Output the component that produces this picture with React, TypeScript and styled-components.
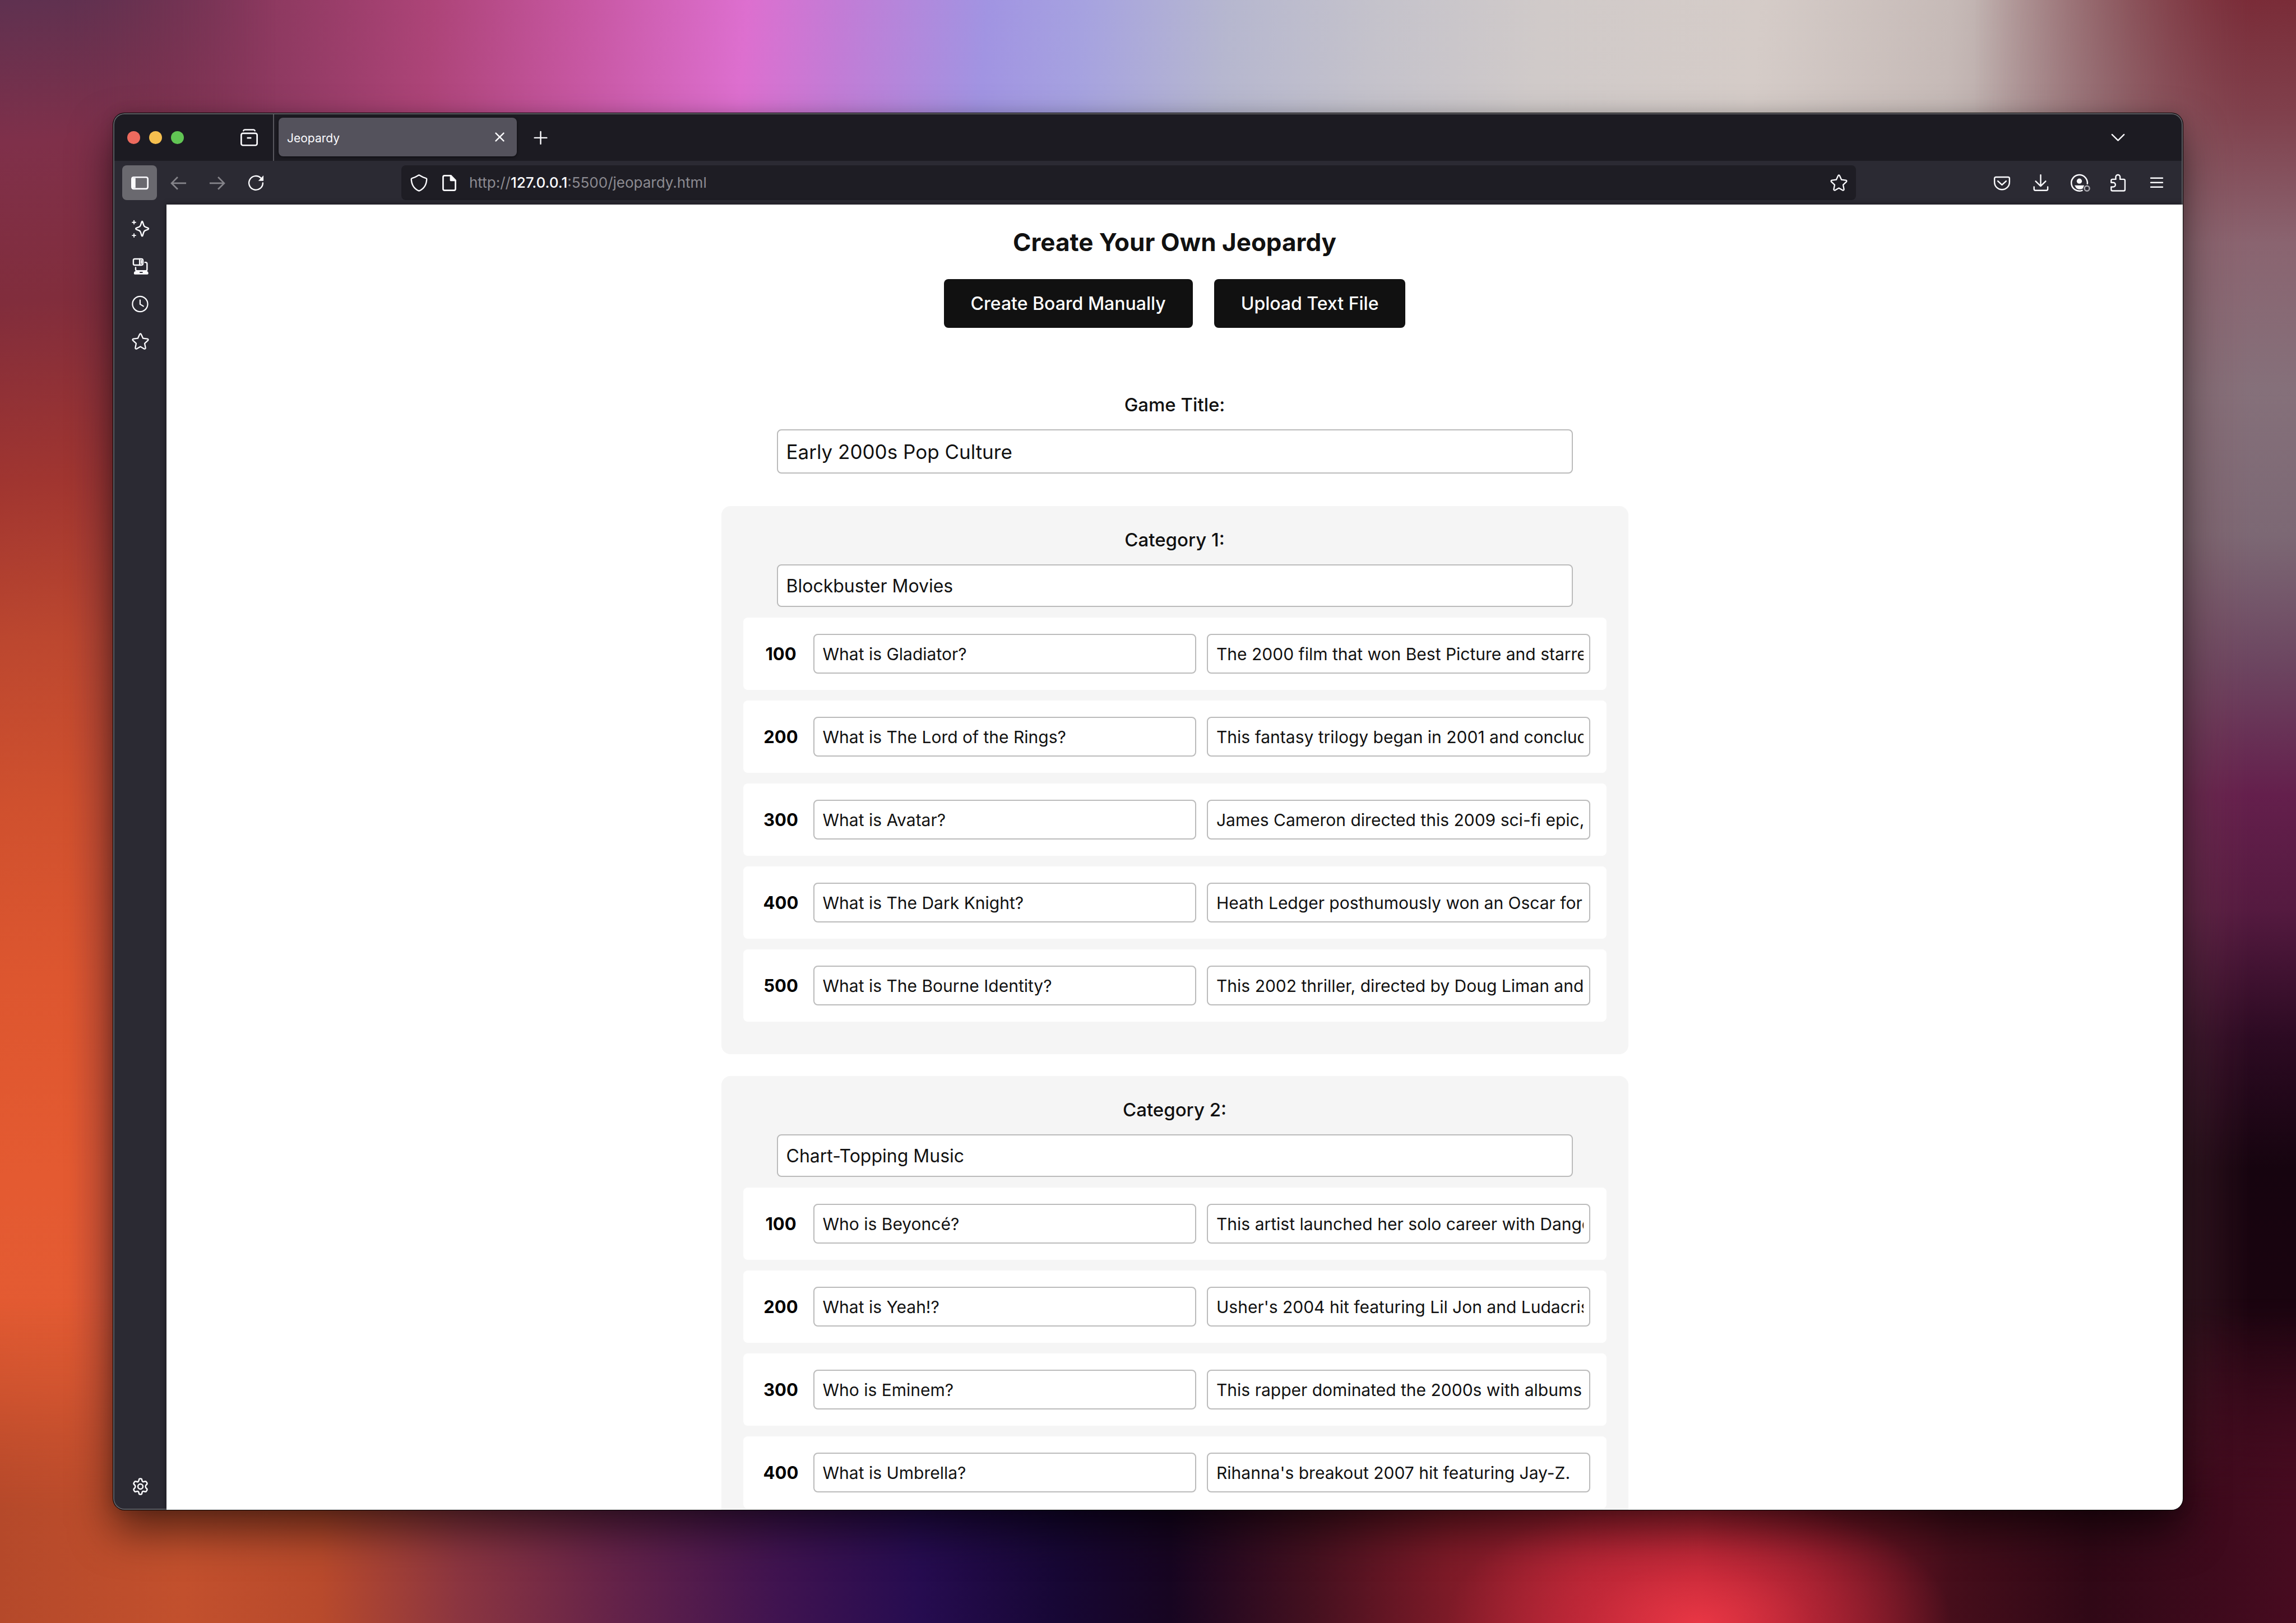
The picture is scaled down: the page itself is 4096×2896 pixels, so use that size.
import React from "react";
import styled, { createGlobalStyle, css } from "styled-components";

const GlobalStyle = createGlobalStyle`
  *, *::before, *::after { box-sizing: border-box; }
  html, body { margin: 0; }
  body, button, input {
    font-family: Inter, "Liberation Sans", sans-serif;
  }
`;

/* ---------- desktop ---------- */

const Desktop = styled.div`
  position: relative;
  isolation: isolate;
  display: flex;
  height: 100vh;
  padding: 202px;
  overflow: hidden;
  background: linear-gradient(
    94deg,
    #5f3352 0%,
    #7c3453 6%,
    #903a62 12%,
    #ad4478 18%,
    #c656a0 24%,
    #dd6fcf 31%,
    #c27cd6 35%,
    #a194e2 41%,
    #a6a2e0 45%,
    #b6b7cf 51%,
    #c4c2cb 57%,
    #d0cac9 64%,
    #d5ccc8 73%,
    #c6bab7 81%,
    #a48d8e 88%,
    #8c5860 94%,
    #7d3440 100%
  );
`;

const Edge = styled.div<{ $side: "left" | "right" | "bottom" }>`
  position: absolute;
  z-index: -1;
  inset: 0;
  ${({ $side }) =>
    $side === "left" &&
    css`
      background: linear-gradient(
        176deg,
        #5f3150 0%,
        #7f304a 8%,
        #812d3c 17%,
        #a03530 27%,
        #bc472f 36%,
        #cf502e 45%,
        #dd562f 55%,
        #e45a31 66%,
        #e35b33 78%,
        #d25231 86%,
        #bc4a2a 93%,
        #b3482a 100%
      );
      mask-image: linear-gradient(90deg, #000 0%, #000 3%, transparent 12%);
    `}
  ${({ $side }) =>
    $side === "right" &&
    css`
      background: linear-gradient(
        180deg,
        #7a2c38 0%,
        #80404c 7%,
        #8a6470 15%,
        #85707a 24%,
        #7c6874 33%,
        #6c4560 41%,
        #641f4c 49%,
        #551a40 56%,
        #2c0a22 64%,
        #16040f 72%,
        #1a040f 81%,
        #3c0a1c 90%,
        #4c0c22 100%
      );
      mask-image: linear-gradient(270deg, #000 0%, #000 2%, transparent 14%);
    `}
  ${({ $side }) =>
    $side === "bottom" &&
    css`
      background:
        radial-gradient(ellipse 11% 8% at 74% 100%, #e83644 0%, rgba(224, 48, 64, 0.5) 45%, transparent 100%),
        linear-gradient(
          90deg,
          #b5492a 0%,
          #c2502d 8%,
          #b84a2c 14%,
          #8b3540 20%,
          #632249 27%,
          #3f1350 34%,
          #260c50 40%,
          #170735 46%,
          #170521 51%,
          #43101f 57%,
          #7c1a27 63%,
          #a12030 69%,
          #ad2333 74%,
          #801828 79%,
          #460e1b 85%,
          #300816 91%,
          #470b20 100%
        );
      mask-image: linear-gradient(0deg, #000 0%, #000 7%, transparent 20%);
    `}
`;

/* ---------- browser window ---------- */

const frameLine = "2px solid #5e5d63";

const Window = styled.div`
  flex: 1;
  min-width: 0;
  display: flex;
  flex-direction: column;
  overflow: hidden;
  border-radius: 20px;
  background: #2b2a33;
  color: #fbfbfe;
  box-shadow:
    0 0 0 1px #050505,
    0 38px 76px rgba(0, 0, 0, 0.55),
    0 0 24px rgba(0, 0, 0, 0.15);
`;

const TitleBar = styled.div`
  flex: none;
  display: flex;
  height: 85px;
  border: ${frameLine};
  border-bottom: 0;
  border-radius: 20px 20px 0 0;
  background: #1c1b22;
`;

const TrafficLights = styled.div`
  display: flex;
  align-items: center;
  gap: 16px;
  padding-left: 23px;
`;

const Light = styled.button<{ $color: string }>`
  width: 23px;
  height: 23px;
  padding: 0;
  border: 0;
  border-radius: 50%;
  background: ${({ $color }) => $color};
`;

const IconButton = styled.button<{ $active?: boolean; $muted?: boolean }>`
  flex: none;
  display: grid;
  place-items: center;
  width: 62px;
  height: 62px;
  padding: 0;
  border: 0;
  border-radius: 8px;
  color: ${({ $muted }) => ($muted ? "#85848a" : "#fbfbfe")};
  background: ${({ $active }) => ($active ? "#6a696f" : "transparent")};
`;

const FirefoxView = styled.div`
  display: flex;
  align-items: center;
  margin-left: 85px;
  padding-right: 12px;
  border-right: 2px solid #57565d;
`;

const Tab = styled.div`
  display: flex;
  align-items: center;
  width: 425px;
  height: 69px;
  margin: 6px 11px 0 8px;
  border-radius: 8px;
  background: #54525c;
  box-shadow: 0 1px 4px rgba(0, 0, 0, 0.6);
`;

const TabLabel = styled.button`
  flex: 1;
  height: 100%;
  padding: 4px 0 0 15px;
  border: 0;
  background: transparent;
  color: inherit;
  font-size: 21px;
  line-height: 28px;
  text-align: left;
`;

const AllTabs = styled.div`
  display: flex;
  align-items: center;
  margin-left: auto;
  padding-right: 83px;
`;

const NewTab = styled.div`
  display: flex;
  align-items: center;
`;

const ToolBar = styled.div`
  flex: none;
  display: flex;
  align-items: center;
  gap: 7px;
  height: 78px;
  padding: 0 14px;
  border-left: ${frameLine};
  border-right: ${frameLine};
`;

const AddressBar = styled.div`
  flex: 1;
  display: flex;
  align-items: center;
  height: 62px;
  margin: 0 222px;
  border-radius: 8px;
  background: #1e1d24;
`;

const AddressIcons = styled.div`
  display: flex;
  width: 121px;
  padding-left: 4px;

  button {
    width: 54px;
  }
`;

const AddressField = styled.div`
  position: relative;
  flex: 1;
  font-size: 26px;
  line-height: 36px;
`;

const AddressText = styled.label`
  color: #8c8b91;

  b {
    font-weight: 500;
    color: #fbfbfe;
  }
`;

const AddressInput = styled.input`
  position: absolute;
  inset: 0;
  width: 100%;
  padding: 0;
  border: 0;
  outline: 0;
  background: #1e1d24;
  color: #fbfbfe;
  font-size: 26px;
  opacity: 0;

  &:focus {
    opacity: 1;
  }
`;

const Body = styled.div`
  flex: 1;
  min-height: 0;
  display: flex;
`;

const SideBar = styled.nav`
  flex: none;
  display: flex;
  flex-direction: column;
  align-items: center;
  gap: 5px;
  width: 95px;
  padding: 12px 0 9px;
  border-left: ${frameLine};
  border-bottom: ${frameLine};
  border-bottom-left-radius: 20px;

  > :last-child {
    margin-top: auto;
  }
`;

/* ---------- web page ---------- */

const Page = styled.main`
  flex: 1;
  min-width: 0;
  overflow: hidden;
  display: flex;
  flex-direction: column;
  align-items: center;
  padding-top: 39px;
  background: #fff;
  color: #111;
  box-shadow: 0 0 10px rgba(0, 0, 0, 0.45);
`;

const Heading = styled.h1`
  flex: none;
  margin: 0 0 38px;
  font-size: 44px;
  line-height: 56px;
  font-weight: 700;
`;

const Actions = styled.div`
  flex: none;
  display: flex;
  gap: 38px;
  margin-bottom: 116px;
`;

const ActionButton = styled.button`
  height: 87px;
  padding: 0 48px;
  border: 0;
  border-radius: 8px;
  background: #111;
  color: #fff;
  font-size: 32px;
  font-weight: 500;
`;

const BoardForm = styled.form`
  flex: none;
  display: flex;
  flex-direction: column;
  width: 100%;
  max-width: 1618px;
`;

const FieldGroup = styled.div`
  display: flex;
  flex-direction: column;
  align-items: center;
`;

const TitleGroup = styled(FieldGroup)`
  margin-bottom: 58px;
`;

const FieldLabel = styled.label`
  margin-bottom: 22px;
  font-size: 33px;
  line-height: 43px;
  font-weight: 500;
`;

const TextInput = styled.input`
  min-width: 0;
  padding: 0 10px 0 15px;
  border: 2px solid #bbb;
  border-radius: 8px;
  background: #fff;
  color: #111;
`;

const TitleInput = styled(TextInput)`
  width: 100%;
  max-width: 1420px;
  height: 79px;
  font-size: 35px;
`;

const CategoryInput = styled(TextInput)`
  width: 100%;
  max-width: 1420px;
  height: 76px;
  margin-bottom: 19px;
  font-size: 32px;
`;

const Category = styled.section`
  margin-bottom: 39px;
  padding: 39px;
  border-radius: 16px;
  background: #f5f5f5;
`;

const ClueRow = styled.div`
  display: flex;
  align-items: center;
  gap: 19px;
  margin-bottom: 19px;
  padding: 29px;
  border-radius: 8px;
  background: #fff;
`;

const Points = styled.strong`
  flex: none;
  width: 77px;
  font-size: 31px;
  line-height: 40px;
  font-weight: 700;
  text-align: center;
  color: #000;
`;

const ClueInput = styled(TextInput)`
  flex: 1;
  height: 71px;
  font-size: 30px;
`;

/* ---------- icons, all on a 16-unit grid ---------- */

const Svg = styled.svg`
  display: block;
  width: 31px;
  height: 31px;
  overflow: visible;
`;

function Icon({ children, w = 1.25 }: { children: React.ReactNode; w?: number }) {
  return (
    <Svg
      viewBox="0 0 16 16"
      fill="none"
      stroke="currentColor"
      strokeWidth={w}
      strokeLinecap="round"
      strokeLinejoin="round"
      aria-hidden="true"
    >
      {children}
    </Svg>
  );
}

const icons = {
  view: (
    <Icon>
      <path d="M2.7 1.7C2.9 1 3.3.8 4 .8h8c.7 0 1.1.2 1.3.9" />
      <rect x=".7" y="4.1" width="14.6" height="11" rx="1.5" strokeWidth="1.4" />
      <path d="M6 8.3h4" strokeWidth="1.5" strokeLinecap="butt" />
    </Icon>
  ),
  close: (
    <Icon>
      <path d="M4.4 4.4l7.2 7.2M11.6 4.4l-7.2 7.2" />
    </Icon>
  ),
  plus: (
    <Icon>
      <path d="M8 2.6v11.2M2.4 8.2h11.2" />
    </Icon>
  ),
  chevron: (
    <Icon>
      <path d="M2.5 5.2L8 10.6l5.5-5.4" />
    </Icon>
  ),
  sidebar: (
    <Icon>
      <rect x=".7" y="2.7" width="14.6" height="10.6" rx="1.5" strokeWidth="1.4" />
      <path d="M1 3.4h3v9.2H1z" fill="currentColor" stroke="none" />
    </Icon>
  ),
  back: (
    <Icon w={1.4}>
      <path d="M15 8.2H1.6M7.2 2.6L1.6 8.2l5.6 5.6" strokeLinecap="butt" strokeLinejoin="miter" />
    </Icon>
  ),
  forward: (
    <Icon w={1.4}>
      <path d="M1 8.2h13.4M8.8 2.6l5.6 5.6-5.6 5.6" strokeLinecap="butt" strokeLinejoin="miter" />
    </Icon>
  ),
  reload: (
    <Icon>
      <path d="M14.4 8A6.4 6.4 0 1 1 12.6 3.5" />
      <path d="M15 1v4.5c0 .3-.2.5-.5.5H10.200z" fill="currentColor" stroke="none" />
    </Icon>
  ),
  shield: (
    <Icon>
      <path d="M8 .7C6 2 3.900 3 1.500 3.700c-.4.100-.600.400-.6.700C1.100 9.500 3.500 13.500 8 15.300c4.500-1.800 6.900-5.800 7.100-10.900 0-.3-.2-.6-.6-.7C12.100 3 10 2 8 .7z" />
    </Icon>
  ),
  page: (
    <Icon w={1.4}>
      <path d="M9.300 1.200H3.700c-.8 0-1.400.600-1.400 1.400v10.800c0 .8.600 1.400 1.400 1.400h8.600c.8 0 1.400-.600 1.400-1.400V5.600z" />
      <path d="M9.300 1.200l4.400 4.400H9.300z" fill="currentColor" />
    </Icon>
  ),
  star: (
    <Icon w={1.2}>
      <path d="M7.3 1.300c.3-.7 1.100-.7 1.400 0l1.700 3.700 4 .5c.8.100 1 .9.500 1.400l-3 2.800.8 4.100c.100.800-.600 1.200-1.200.9L8 12.700l-3.500 2c-.6.300-1.300-.100-1.200-.9l.8-4.100-3-2.800c-.5-.5-.300-1.300.5-1.400l4-.5z" />
    </Icon>
  ),
  pocket: (
    <Icon>
      <path d="M2.400 2.600h11.200c.8 0 1.300.500 1.300 1.300V7.200a6.900 6.900 0 0 1-13.800 0V3.900c0-.8.500-1.300 1.300-1.300z" />
      <path d="M4.200 6.200L8 9.800l3.800-3.600" />
    </Icon>
  ),
  download: (
    <Icon>
      <path d="M8 .6v10.200M3.400 6.400L8 10.900l4.600-4.500" />
      <path d="M1.900 11.600v1.900c0 .8.500 1.300 1.300 1.300h10c.8 0 1.300-.5 1.300-1.300v-1.900" />
    </Icon>
  ),
  account: (
    <Icon>
      <path d="M15.400 8.700A7.400 7.400 0 1 0 10.600 14.900" strokeWidth="1.300" />
      <circle cx="8" cy="6.300" r="2.400" fill="currentColor" stroke="none" />
      <path d="M3.600 10.200h8.800l-1.300 2.900c-2 1.100-4.600.9-6-.500z" fill="currentColor" stroke="none" />
      <circle cx="15" cy="13" r="2.300" stroke="#a9a8ae" strokeWidth="1.300" />
    </Icon>
  ),
  extension: (
    <Icon>
      <path d="M1.700 7.600V5.800c0-.8.400-1.200 1.200-1.200h3V2.500a2 2 0 0 1 4 0v2.100h3.300c.8 0 1.200.4 1.200 1.200v8.200c0 .8-.4 1.200-1.200 1.200H2.900c-.8 0-1.200-.4-1.200-1.200v-2.400h1.900a2 2 0 0 0 0-4z" />
    </Icon>
  ),
  menu: (
    <Icon>
      <path d="M2.600 3.500h10.800M2.600 7.600h10.800M2.600 11.700h10.800" />
    </Icon>
  ),
  sparkle: (
    <Icon>
      <path d="M9.100 1.600c.2-.8.800-.8 1 0l.9 2.900c.3.900.8 1.500 1.700 1.800l2.300.9c.7.300.7.900 0 1.200l-2.300.9c-.9.300-1.400.9-1.700 1.800l-.9 2.900c-.2.800-.8.800-1 0l-.9-2.900c-.3-.9-.8-1.500-1.700-1.800l-2.300-.9c-.7-.3-.7-.9 0-1.200l2.300-.9c.9-.3 1.400-.9 1.700-1.800z" />
      <path d="M2.100.4v3M.6 1.900h3M2.100 12.500v3M.6 14h3" strokeWidth="1" />
    </Icon>
  ),
  devices: (
    <Icon>
      <rect x="1.500" y="1" width="8.800" height="5.700" rx="1.300" />
      <path d="M7.300 1v5.700M8.900 2.600v2.400" />
      <path d="M12.200 4.200h.600c.8 0 1.300.5 1.300 1.300v5.200c0 .8-.5 1.300-1.300 1.300H4.900c-.8 0-1.300-.5-1.300-1.300V9" />
      <path
        d="M3.700 12.300h9.900c.9 0 1.700.8 1.700 1.700v.4c0 .5-.3.900-.9.900H2.900c-.6 0-.9-.4-.9-.9V14c0-.9.8-1.700 1.700-1.700zM7.300 12.900v1h2.800v-1z"
        fill="currentColor"
        fillRule="evenodd"
        stroke="none"
      />
    </Icon>
  ),
  history: (
    <Icon w={1.15}>
      <circle cx="7.700" cy="8" r="7" />
      <path d="M7.700 4.300V8.200l3 1.800" />
    </Icon>
  ),
  settings: (
    <Icon w={1.3}>
      <circle cx="8" cy="8" r="2.300" />
      <path d="M6.600 1.900c.100-.7.500-1.100 1.100-1.100h.6c.6 0 1 .4 1.100 1.100l.2.900c.2.700.8 1 1.500.8l.900-.3c.7-.2 1.200-.100 1.500.5l.5.800c.3.600.200 1.100-.3 1.600l-.6.600c-.5.500-.5 1.900 0 2.400l.6.600c.5.500.6 1 .3 1.600l-.5.800c-.3.600-.8.700-1.500.5l-.9-.3c-.7-.2-1.300.100-1.500.8l-.2.900c-.100.700-.5 1.100-1.100 1.100h-.6c-.6 0-1-.4-1.100-1.100l-.2-.9c-.2-.7-.8-1-1.500-.8l-.9.300c-.7.200-1.200.100-1.500-.5l-.5-.8c-.3-.6-.2-1.100.3-1.600l.6-.6c.5-.5.5-1.900 0-2.400l-.6-.6c-.5-.5-.6-1-.3-1.600l.5-.8c.3-.6.8-.7 1.500-.5l.9.300c.7.200 1.300-.100 1.500-.8z" />
    </Icon>
  ),
};

/* ---------- data ---------- */

type Clue = [points: number, answer: string, clue: string];

const categories: { name: string; clues: Clue[] }[] = [
  {
    name: "Blockbuster Movies",
    clues: [
      [100, "What is Gladiator?", "The 2000 film that won Best Picture and starred"],
      [200, "What is The Lord of the Rings?", "This fantasy trilogy began in 2001 and concluded"],
      [300, "What is Avatar?", "James Cameron directed this 2009 sci-fi epic,"],
      [400, "What is The Dark Knight?", "Heath Ledger posthumously won an Oscar for"],
      [500, "What is The Bourne Identity?", "This 2002 thriller, directed by Doug Liman and"],
    ],
  },
  {
    name: "Chart-Topping Music",
    clues: [
      [100, "Who is Beyoncé?", "This artist launched her solo career with Danger"],
      [200, "What is Yeah!?", "Usher's 2004 hit featuring Lil Jon and Ludacris."],
      [300, "Who is Eminem?", "This rapper dominated the 2000s with albums"],
      [400, "What is Umbrella?", "Rihanna's breakout 2007 hit featuring Jay-Z."],
    ],
  },
];

export default function App() {
  return (
    <Desktop>
      <GlobalStyle />
      <Edge $side="left" />
      <Edge $side="right" />
      <Edge $side="bottom" />
      <Window>
        <TitleBar>
          <TrafficLights>
            <Light $color="#ed6a5e" aria-label="Close window" />
            <Light $color="#f5bf4f" aria-label="Minimize window" />
            <Light $color="#61c554" aria-label="Zoom window" />
          </TrafficLights>
          <FirefoxView>
            <IconButton aria-label="Recent browsing">{icons.view}</IconButton>
          </FirefoxView>
          <Tab>
            <TabLabel>Jeopardy</TabLabel>
            <IconButton aria-label="Close tab">{icons.close}</IconButton>
          </Tab>
          <NewTab>
            <IconButton aria-label="New tab">{icons.plus}</IconButton>
          </NewTab>
          <AllTabs>
            <IconButton aria-label="List all tabs">{icons.chevron}</IconButton>
          </AllTabs>
        </TitleBar>

        <ToolBar>
          <IconButton $active aria-label="Sidebar">{icons.sidebar}</IconButton>
          <IconButton $muted aria-label="Back">{icons.back}</IconButton>
          <IconButton $muted aria-label="Forward">{icons.forward}</IconButton>
          <IconButton aria-label="Reload">{icons.reload}</IconButton>
          <AddressBar>
            <AddressIcons>
              <IconButton aria-label="Tracking protection">{icons.shield}</IconButton>
              <IconButton aria-label="Site information">{icons.page}</IconButton>
            </AddressIcons>
            <AddressField>
              <AddressText htmlFor="address">
                http://<b>127.0.0.1</b>:5500/jeopardy.html
              </AddressText>
              <AddressInput id="address" type="text" defaultValue="http://127.0.0.1:5500/jeopardy.html" />
            </AddressField>
            <IconButton aria-label="Bookmark this page">{icons.star}</IconButton>
          </AddressBar>
          <IconButton aria-label="Save to Pocket">{icons.pocket}</IconButton>
          <IconButton aria-label="Downloads">{icons.download}</IconButton>
          <IconButton aria-label="Account">{icons.account}</IconButton>
          <IconButton aria-label="Extensions">{icons.extension}</IconButton>
          <IconButton aria-label="Menu">{icons.menu}</IconButton>
        </ToolBar>

        <Body>
          <SideBar>
            <IconButton aria-label="AI chatbot">{icons.sparkle}</IconButton>
            <IconButton aria-label="Synced tabs">{icons.devices}</IconButton>
            <IconButton aria-label="History">{icons.history}</IconButton>
            <IconButton aria-label="Bookmarks">{icons.star}</IconButton>
            <IconButton aria-label="Customize sidebar">{icons.settings}</IconButton>
          </SideBar>

          <Page>
            <Heading>Create Your Own Jeopardy</Heading>
            <Actions>
              <ActionButton>Create Board Manually</ActionButton>
              <ActionButton>Upload Text File</ActionButton>
            </Actions>
            <BoardForm>
              <TitleGroup>
                <FieldLabel htmlFor="title">Game Title:</FieldLabel>
                <TitleInput id="title" type="text" defaultValue="Early 2000s Pop Culture" />
              </TitleGroup>
              {categories.map((category, i) => (
                <Category key={category.name}>
                  <FieldGroup>
                    <FieldLabel htmlFor={`category-${i}`}>Category {i + 1}:</FieldLabel>
                    <CategoryInput id={`category-${i}`} type="text" defaultValue={category.name} />
                  </FieldGroup>
                  {category.clues.map(([points, answer, clue]) => (
                    <ClueRow key={points}>
                      <Points>{points}</Points>
                      <ClueInput type="text" aria-label={`${points} answer`} defaultValue={answer} />
                      <ClueInput type="text" aria-label={`${points} clue`} defaultValue={clue} />
                    </ClueRow>
                  ))}
                </Category>
              ))}
            </BoardForm>
          </Page>
        </Body>
      </Window>
    </Desktop>
  );
}
